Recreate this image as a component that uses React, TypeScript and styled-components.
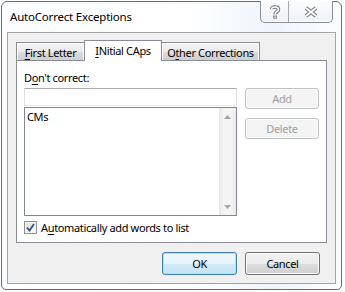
import React from "react";
import styled, { createGlobalStyle, css } from "styled-components";

const GlobalStyle = createGlobalStyle`
  html, body {
    margin: 0;
    padding: 0;
    background: #ffffff;
  }
  body {
    font-family: "Noto Sans", "DejaVu Sans", sans-serif;
    font-size: 11px;
    letter-spacing: -0.35px;
    color: #000;
  }
`;

const Screen = styled.div`
  width: 345px;
  height: 292px;
  box-sizing: border-box;
  padding: 1px 0 0 1px;
  overflow: hidden;
`;

const Window = styled.div`
  width: 341px;
  height: 289px;
  box-sizing: border-box;
  border: 1px solid #6c6c6c;
  border-radius: 6px 6px 5px 5px;
  background: linear-gradient(90deg, #fcfdfe 0%, #ffffff 55%, #eef5fb 80%, #fbfdff 100%);
  display: flex;
  flex-direction: column;
  padding: 0 5px 5px 5px;
`;

const TitleBar = styled.div`
  height: 30px;
  display: flex;
  justify-content: space-between;
  align-items: flex-start;
`;

const Title = styled.div`
  padding: 7px 0 0 3px;
  line-height: 15px;
  font-size: 11.5px;
  letter-spacing: -0.2px;
`;

const CaptionGroup = styled.div`
  display: flex;
  margin: -1px 3px 0 0;
  height: 21px;
  border: 1px solid #8a8e94;
  border-top: none;
  border-radius: 0 0 5px 5px;
  overflow: hidden;
  background: linear-gradient(#fbfcfd, #eef2f6);
  box-shadow: inset 0 -1px 0 #ffffff;
`;

const CaptionButton = styled.div<{ $w: number; $divider?: boolean }>`
  width: ${(p) => p.$w}px;
  height: 100%;
  display: flex;
  align-items: center;
  justify-content: center;
  ${(p) =>
    p.$divider &&
    css`
      border-right: 1px solid #a5aab1;
    `}
`;

const Client = styled.div`
  flex: 1;
  border: 1px solid #a4a4a4;
  background: #f0f0f0;
  padding: 7px 8px 0 8px;
  display: flex;
  flex-direction: column;
`;

const TabStrip = styled.div`
  display: flex;
  align-items: flex-end;
  height: 20px;
`;

const Tab = styled.div<{ $w: number; $active?: boolean; $first?: boolean }>`
  box-sizing: border-box;
  width: ${(p) => p.$w}px;
  margin-left: ${(p) => (p.$first ? 0 : -1)}px;
  border: 1px solid #898c95;
  border-bottom: none;
  text-align: center;
  line-height: 15px;
  ${(p) =>
    p.$active
      ? css`
          position: relative;
          z-index: 1;
          height: 21px;
          margin-bottom: -1px;
          padding-top: 2px;
          background: #ffffff;
        `
      : css`
          height: 18px;
          padding-top: 2px;
          background: linear-gradient(#f3f3f3 0%, #ebebeb 50%, #dedede 51%, #cfcfcf 100%);
          box-shadow: inset 1px 1px 0 #fcfcfc, inset -1px 0 0 #fcfcfc;
        `}
`;

const Key = styled.span`
  text-decoration: underline;
  text-underline-offset: 2px;
`;

const Panel = styled.div`
  height: 183px;
  box-sizing: border-box;
  border: 1px solid #898c95;
  background: #ffffff;
  padding: 9px 7px 0 7px;
  display: flex;
  flex-direction: column;
`;

const Label = styled.div`
  line-height: 15px;
  height: 15px;
`;

const EditRow = styled.div`
  display: flex;
  gap: 8px;
  margin-top: 3px;
`;

const EditColumn = styled.div`
  width: 213px;
  display: flex;
  flex-direction: column;
  gap: 1px;
`;

const TextBox = styled.div`
  box-sizing: border-box;
  height: 18px;
  border: 1px solid #abadb3;
  border-left-color: #e2e3ea;
  border-right-color: #dbdfe6;
  border-bottom-color: #e3e9ef;
  background: #fff;
`;

const ListBox = styled.div`
  box-sizing: border-box;
  height: 109px;
  border: 1px solid #828790;
  background: #fff;
  display: flex;
`;

const ListItems = styled.div`
  flex: 1;
  padding: 2px 0 0 2px;
  line-height: 14px;
`;

const ScrollBar = styled.div`
  width: 17px;
  background: linear-gradient(90deg, #e8e8e8 0%, #f4f4f4 30%, #f4f4f4 70%, #eaeaea 100%);
  display: flex;
  flex-direction: column;
  justify-content: space-between;
  align-items: center;
`;

const ScrollArrow = styled.div`
  height: 17px;
  width: 17px;
  display: flex;
  align-items: center;
  justify-content: center;
`;

const SideButtons = styled.div`
  display: flex;
  flex-direction: column;
  gap: 9px;
`;

const Button = styled.div<{ $disabled?: boolean; $default?: boolean; $w: number; $h: number }>`
  box-sizing: border-box;
  width: ${(p) => p.$w}px;
  height: ${(p) => p.$h}px;
  border-radius: 3px;
  display: flex;
  align-items: center;
  justify-content: center;
  border: 1px solid #707070;
  background: linear-gradient(#f2f2f2 0%, #ebebeb 50%, #dddddd 51%, #cfcfcf 100%);
  box-shadow: inset 0 0 0 1px #fcfcfc;
  ${(p) =>
    p.$disabled &&
    css`
      border-color: #c0c3c6;
      background: #f4f4f4;
      box-shadow: inset 0 0 0 1px #fbfbfb;
      color: #a0a0a0;
    `}
  ${(p) =>
    p.$default &&
    css`
      border-color: #3c7fb1;
      background: linear-gradient(#eef7fc 0%, #e5f3fb 50%, #d0eaf8 51%, #c4e4f6 100%);
      box-shadow: inset 0 0 0 1px #a9e4fc;
    `}
`;

const CheckRow = styled.label`
  display: flex;
  align-items: center;
  gap: 4px;
  margin-top: 5px;
  height: 13px;
  line-height: 15px;
`;

const CheckBox = styled.span`
  box-sizing: border-box;
  width: 13px;
  height: 13px;
  border: 1px solid #8e8f8f;
  background: linear-gradient(135deg, #dcdcdc 0%, #f0f0f0 60%, #fbfbfb 100%);
  box-shadow: inset 0 0 0 1px #f4f4f4;
  display: flex;
  align-items: center;
  justify-content: center;
`;

const Footer = styled.div`
  display: flex;
  justify-content: flex-end;
  gap: 8px;
  margin-top: 9px;
  padding-right: 7px;
`;

function HelpGlyph() {
  const d = "M4.5 5.2 C4.5 2.2 11.5 2.2 11.5 5.4 C11.5 7.6 8 7.8 8 10.2";
  return (
    <svg width="16" height="16" viewBox="0 0 16 16">
      <path d={d} fill="none" stroke="#6e737a" strokeWidth="3.6" strokeLinecap="butt" />
      <rect x="6.2" y="11.6" width="3.6" height="3" fill="#6e737a" />
      <path d={d} fill="none" stroke="#ffffff" strokeWidth="1.6" strokeLinecap="butt" />
      <rect x="7.2" y="12.4" width="1.6" height="1.4" fill="#ffffff" />
    </svg>
  );
}

function CloseGlyph() {
  const d = "M3 3 L13 11 M13 3 L3 11";
  return (
    <svg width="16" height="14" viewBox="0 0 16 14">
      <path d={d} fill="none" stroke="#6e737a" strokeWidth="4" />
      <path d={d} fill="none" stroke="#ffffff" strokeWidth="2" />
    </svg>
  );
}

function Arrow({ up }: { up?: boolean }) {
  return (
    <svg width="7" height="4" viewBox="0 0 7 4">
      <path d={up ? "M0 4 L3.5 0 L7 4 Z" : "M0 0 L7 0 L3.5 4 Z"} fill="#a6a6a6" />
    </svg>
  );
}

function CheckMark() {
  return (
    <svg width="9" height="9" viewBox="0 0 9 9">
      <path d="M1 4.5 L3.5 7.5 L8 1" fill="none" stroke="#3c4e7e" strokeWidth="1.8" />
    </svg>
  );
}

export default function App() {
  return (
    <>
      <GlobalStyle />
      <Screen>
        <Window>
          <TitleBar>
            <Title>AutoCorrect Exceptions</Title>
            <CaptionGroup>
              <CaptionButton $w={27} $divider>
                <HelpGlyph />
              </CaptionButton>
              <CaptionButton $w={43}>
                <CloseGlyph />
              </CaptionButton>
            </CaptionGroup>
          </TitleBar>
          <Client>
            <TabStrip>
              <Tab $w={69} $first>
                <Key>F</Key>irst Letter
              </Tab>
              <Tab $w={78} $active>
                <Key>I</Key>Nitial CAps
              </Tab>
              <Tab $w={99}>
                O<Key>t</Key>her Corrections
              </Tab>
            </TabStrip>
            <Panel>
              <Label>
                D<Key>o</Key>n't correct:
              </Label>
              <EditRow>
                <EditColumn>
                  <TextBox />
                  <ListBox>
                    <ListItems>CMs</ListItems>
                    <ScrollBar>
                      <ScrollArrow>
                        <Arrow up />
                      </ScrollArrow>
                      <ScrollArrow>
                        <Arrow />
                      </ScrollArrow>
                    </ScrollBar>
                  </ListBox>
                </EditColumn>
                <SideButtons>
                  <Button $w={74} $h={21} $disabled>
                    Add
                  </Button>
                  <Button $w={74} $h={21} $disabled>
                    Delete
                  </Button>
                </SideButtons>
              </EditRow>
              <CheckRow>
                <CheckBox>
                  <CheckMark />
                </CheckBox>
                <span>
                  A<Key>u</Key>tomatically add words to list
                </span>
              </CheckRow>
            </Panel>
            <Footer>
              <Button $w={75} $h={23} $default>
                OK
              </Button>
              <Button $w={75} $h={23}>
                Cancel
              </Button>
            </Footer>
          </Client>
        </Window>
      </Screen>
    </>
  );
}
